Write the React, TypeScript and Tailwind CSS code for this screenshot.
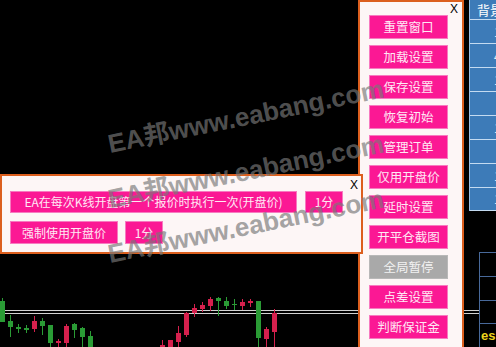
const PANEL_BUTTONS = [
  { label: "重置窗口" },
  { label: "加载设置" },
  { label: "保存设置" },
  { label: "恢复初始" },
  { label: "管理订单" },
  { label: "仅用开盘价" },
  { label: "延时设置" },
  { label: "开平仓截图" },
  { label: "全局暂停", off: true },
  { label: "点差设置" },
  { label: "判断保证金" },
];

// x, bodyTop, bodyBottom, wickTop, wickBottom, up
const CANDLES: [number, number, number, number, number, boolean][] = [
  [0, 301, 322, 298, 322, true],
  [8, 321, 327, 315, 337, true],
  [16, 327, 329, 324, 333, true],
  [24, 328, 330, 325, 333, true],
  [32, 321, 329, 316, 332, false],
  [40, 321, 326, 318, 335, true],
  [48, 325, 343, 325, 347, true],
  [56, 341, 343, 339, 347, false],
  [64, 326, 343, 324, 347, false],
  [72, 324, 330, 323, 338, true],
  [80, 328, 337, 327, 347, true],
  [88, 336, 347, 331, 347, true],
  [160, 345, 347, 340, 347, false],
  [168, 340, 347, 340, 347, false],
  [176, 333, 342, 326, 347, false],
  [184, 313, 335, 312, 337, false],
  [192, 308, 313, 304, 317, false],
  [200, 305, 309, 302, 312, false],
  [208, 299, 306, 297, 311, false],
  [216, 298, 301, 297, 316, true],
  [224, 301, 306, 297, 309, true],
  [232, 304, 305, 299, 310, true],
  [240, 302, 306, 299, 310, false],
  [248, 301, 303, 299, 307, false],
  [256, 301, 338, 301, 347, true],
  [264, 329, 339, 327, 347, false],
  [272, 313, 332, 309, 347, false],
];

const WATERMARKS = ["top-[131px]", "top-[186px]", "top-[241px]"];

function Chart() {
  return (
    <svg className="absolute inset-0" width="496" height="347" viewBox="0 0 496 347">
      <line x1="0" y1="310.5" x2="479" y2="310.5" stroke="#d2d2d2" />
      <line x1="0" y1="313.5" x2="479" y2="313.5" stroke="#d2d2d2" />
      {CANDLES.map(([x, bt, bb, wt, wb, up]) => {
        const c = up ? "#2a9b35" : "#d5204d";
        return (
          <g key={x}>
            <rect x={x + 2} y={wt} width="1" height={wb - wt} fill={c} />
            <rect x={x} y={bt} width="5" height={Math.max(bb - bt, 1)} fill={c} />
          </g>
        );
      })}
    </svg>
  );
}

function PinkButton({ label, off, className }: { label: string; off?: boolean; className: string }) {
  return (
    <div
      className={`flex items-center justify-center border leading-none ${
        off ? "border-[#b8b8b8] bg-[#a9a9a9] text-[#f2f2f2]" : "border-[#f77ac0] bg-[#fb1894] text-[#ffe8f4]"
      } ${className}`}
    >
      {label}
    </div>
  );
}

export default function App() {
  return (
    <div className="relative h-[347px] w-[496px] overflow-hidden bg-black font-['Noto_Sans_CJK_SC',sans-serif]">
      <Chart />

      <div className="relative flex items-start">
        <div className="w-[358px] shrink-0" />

        <div className="flex h-[360px] w-[106px] shrink-0 flex-col border-2 border-[#dc5f1e] bg-[#fdf6f6]">
          <div className="flex h-[13px] justify-end pr-[4px] pt-[1px] font-['Liberation_Sans',sans-serif] text-[12px] leading-none text-black">
            X
          </div>
          <div className="flex flex-col gap-[6px] pl-[9px]">
            {PANEL_BUTTONS.map((b) => (
              <PinkButton key={b.label} label={b.label} off={b.off} className="h-[24px] w-[79px] text-[12.5px]" />
            ))}
          </div>
        </div>

        <div className="w-[5px] shrink-0" />

        <div className="flex w-[27px] shrink-0 flex-col">
          <div className="w-[60px] border-l border-[#9cc0e4] bg-[#3d7bb8] text-white">
            <div className="flex h-[19px] items-center whitespace-nowrap pl-[7px] text-[13px] leading-none">
              背景颜色
            </div>
            {["1", "4", "1", "", "1", "", "1", "1"].map((t, i) => (
              <div
                key={i}
                className={`flex h-[24px] items-center border-t border-[#c4dbf1] pl-[24px] text-[12px] leading-none text-[#e6eef8] ${
                  i === 7 ? "border-b" : ""
                }`}
              >
                {t}
              </div>
            ))}
          </div>

          <div className="ml-[10px] mt-[41px] w-[40px] border-l border-[#48699a]">
            <div className="h-[24px] border-t border-[#48699a]" />
            <div className="h-[24px] border-t border-[#48699a]" />
            <div className="h-[23px] border-t border-[#48699a]" />
            <div className="flex h-[24px] items-center border-t border-[#48699a] pl-[1px] font-['Liberation_Sans',sans-serif] text-[13px] font-bold leading-none text-[#ecd41c]">
              essage
            </div>
          </div>
        </div>
      </div>

      <div className="absolute left-0 top-[174px] z-20 flex h-[80px] w-[363px] flex-col border-2 border-[#dc5f1e] bg-[#fdf6f6]">
        <div className="flex h-[15px] justify-end pr-[3px] pt-[3px] font-['Liberation_Sans',sans-serif] text-[12px] leading-none text-black">
          X
        </div>
        <div className="flex flex-col gap-[8px] pl-[8px]">
          <div className="flex gap-[8px]">
            <PinkButton label="EA在每次K线开盘第一个报价时执行一次(开盘价)" className="h-[22px] w-[287px] text-[12px]" />
            <PinkButton label="1分" className="h-[22px] w-[38px] text-[12px]" />
          </div>
          <div className="flex gap-[7px]">
            <PinkButton label="强制使用开盘价" className="h-[23px] w-[108px] text-[12px]" />
            <PinkButton label="1分" className="h-[23px] w-[38px] text-[12px]" />
          </div>
        </div>
      </div>

      {WATERMARKS.map((top) => (
        <span
          key={top}
          className={`pointer-events-none absolute left-[110px] z-30 origin-[0_22px] rotate-[-11.5deg] whitespace-nowrap font-['Liberation_Sans','Noto_Sans_CJK_SC',sans-serif] text-[26px] font-bold leading-none text-[rgba(120,120,120,0.68)] ${top}`}
        >
          EA邦www.eabang.com
        </span>
      ))}
    </div>
  );
}
